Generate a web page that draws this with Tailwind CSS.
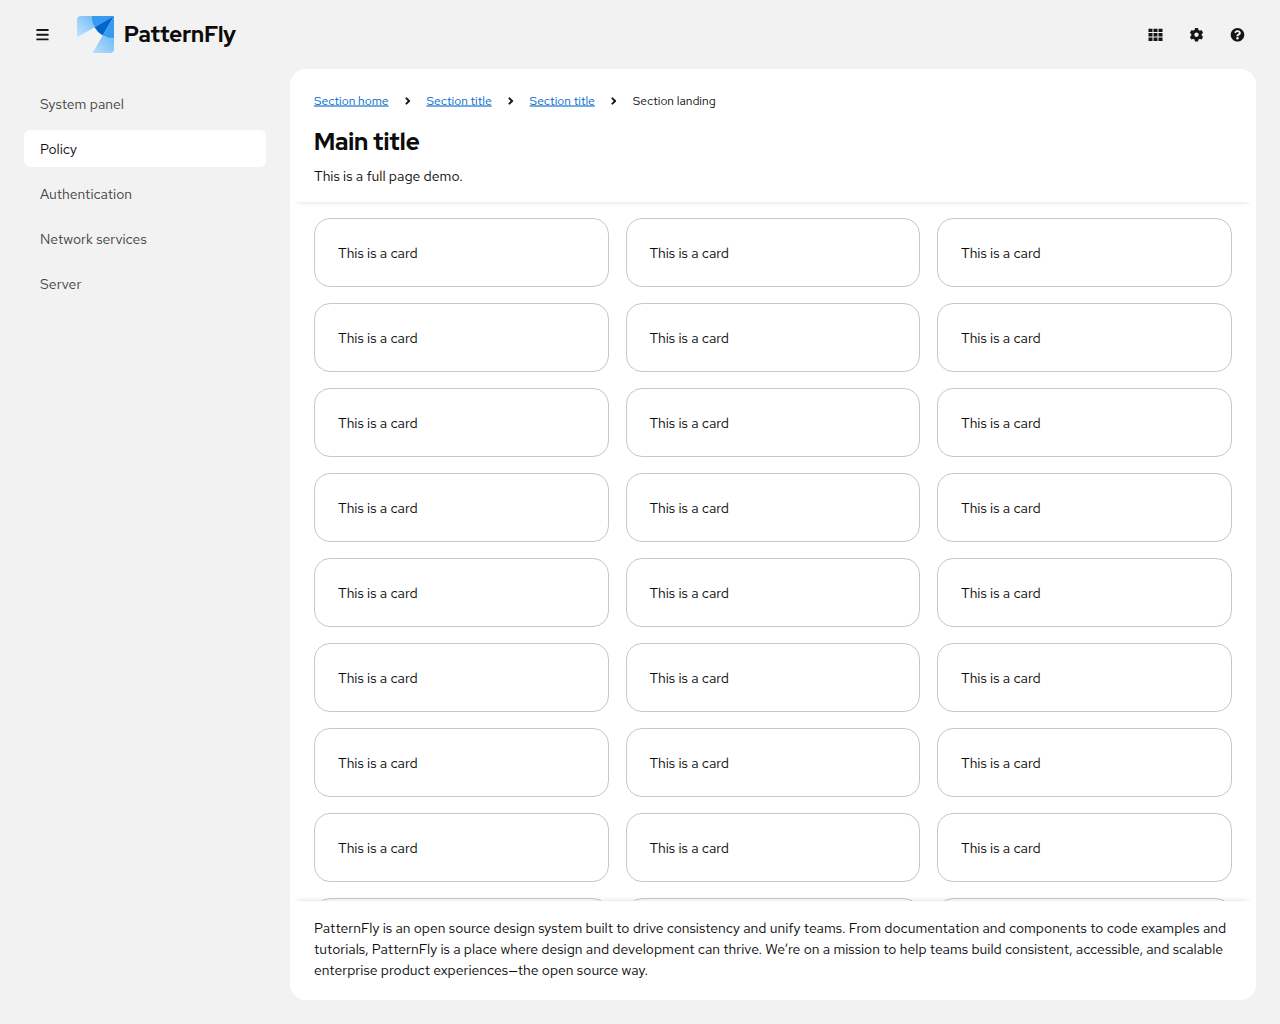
<!DOCTYPE html>
<html lang="en">
<head>
<meta charset="utf-8">
<title>PatternFly</title>
<script src="https://cdn.jsdelivr.net/npm/@tailwindcss/browser@4"></script>
</head>
<body class="h-screen overflow-hidden bg-[#f2f2f2] font-['Red_Hat_Text',Lato,sans-serif] text-sm leading-[21px] text-[#0c0c0c]">
<div class="flex h-screen flex-col">
  <header class="flex h-[69px] shrink-0 items-center justify-between pr-[35px] pl-9">
    <div class="flex items-center">
      <button class="h-[13px] w-[13px]" aria-label="Menu">
        <svg class="size-[13px]" viewBox="0 0 13 13" fill="#151515"><rect x=".4" y="1.1" width="12.2" height="1.9" rx=".4"/><rect x=".4" y="5.75" width="12.2" height="1.9" rx=".4"/><rect x=".4" y="10.4" width="12.2" height="1.9" rx=".4"/></svg>
      </button>
      <svg class="ml-7 size-[37px]" viewBox="0 0 37 37">
        <defs>
          <linearGradient id="a" x1="2" y1="20" x2="18" y2="2" gradientUnits="userSpaceOnUse"><stop stop-color="#bee1fc"/><stop offset="1" stop-color="#73bcf7"/></linearGradient>
          <linearGradient id="b" x1="18" y1="36" x2="34" y2="20" gradientUnits="userSpaceOnUse"><stop stop-color="#b5dbfa"/><stop offset="1" stop-color="#73bcf7"/></linearGradient>
        </defs>
        <path fill="url(#a)" d="M4 0H14.5A22.5 22.5 0 0 0 17.5 11.25L0 21.5V4A4 4 0 0 1 4 0Z"/>
        <path fill="#389af0" d="M14.5 0H37L17.5 11.25A22.5 22.5 0 0 1 14.5 0Z"/>
        <path fill="#0066cc" d="M37 0L17.5 11.25A22.5 22.5 0 0 0 25.75 19.5Z"/>
        <path fill="#389af0" d="M37 0L25.75 19.5A22.5 22.5 0 0 0 37 22.5Z"/>
        <path fill="url(#b)" d="M25.75 19.5A22.5 22.5 0 0 0 37 22.5V33A4 4 0 0 1 33 37H15.5Z"/>
      </svg>
      <span class="ml-2.5 pb-px font-['Red_Hat_Display',Inter,sans-serif] text-[22px] font-extrabold">PatternFly</span>
    </div>
    <div class="flex items-center gap-[26px]">
      <svg class="size-[15px]" viewBox="0 0 15 15" fill="#151515"><path d="M.5 1.7h4v3.4h-4zM5.5 1.7h4v3.4h-4zM10.5 1.7h4v3.4h-4zM.5 6.1h4v3.4h-4zM5.5 6.1h4v3.4h-4zM10.5 6.1h4v3.4h-4zM.5 10.5h4v3.4h-4zM5.5 10.5h4v3.4h-4zM10.5 10.5h4v3.4h-4z"/></svg>
      <svg class="size-[15px]" viewBox="-18 -28 548 548" fill="#151515"><path d="M487.4 315.7l-42.6-24.6c4.3-23.2 4.3-47 0-70.2l42.6-24.6c4.9-2.8 7.1-8.6 5.5-14-11.1-35.6-30-67.8-54.7-94.6-3.8-4.1-10-5.1-14.8-2.3L380.8 110c-17.9-15.4-38.5-27.3-60.8-35.1V25.8c0-5.6-3.9-10.5-9.4-11.7-36.7-8.2-74.3-7.8-109.2 0-5.5 1.2-9.4 6.1-9.4 11.7V75c-22.2 7.9-42.8 19.8-60.8 35.1L88.7 85.5c-4.9-2.8-11-1.9-14.8 2.3-24.7 26.7-43.6 58.9-54.7 94.6-1.7 5.4.6 11.2 5.5 14L67.3 221c-4.3 23.2-4.3 47 0 70.2l-42.6 24.6c-4.9 2.8-7.1 8.6-5.5 14 11.1 35.6 30 67.8 54.7 94.6 3.8 4.1 10 5.1 14.8 2.3l42.6-24.6c17.9 15.4 38.5 27.3 60.8 35.1v49.2c0 5.6 3.9 10.5 9.4 11.7 36.7 8.2 74.3 7.8 109.2 0 5.5-1.2 9.4-6.1 9.4-11.7v-49.2c22.2-7.9 42.8-19.8 60.8-35.1l42.6 24.6c4.9 2.8 11 1.9 14.8-2.3 24.7-26.7 43.6-58.9 54.7-94.6 1.5-5.5-.7-11.3-5.6-14.1zM256 336c-44.1 0-80-35.9-80-80s35.9-80 80-80 80 35.9 80 80-35.9 80-80 80z"/></svg>
      <svg class="size-[15px]" viewBox="-18 -28 548 548" fill="#151515"><path d="M504 256c0 136.997-111.043 248-248 248S8 392.997 8 256C8 119.083 119.043 8 256 8s248 111.083 248 248zM262.655 90c-54.497 0-89.255 22.957-116.549 63.758-3.536 5.286-2.353 12.415 2.715 16.258l34.699 26.31c5.205 3.947 12.621 3.008 16.665-2.122 17.864-22.658 30.113-35.797 57.303-35.797 20.429 0 45.698 13.148 45.698 32.958 0 14.976-12.363 22.667-32.534 33.976C247.128 238.528 216 254.941 216 296v4c0 6.627 5.373 12 12 12h56c6.627 0 12-5.373 12-12v-1.333c0-28.462 83.186-29.647 83.186-106.667 0-58.002-60.165-102-116.531-102zM256 338c-25.365 0-46 20.635-46 46 0 25.364 20.635 46 46 46s46-20.636 46-46c0-25.365-20.635-46-46-46z"/></svg>
    </div>
  </header>
  <div class="flex min-h-0 flex-1 pb-6">
    <nav class="w-[290px] shrink-0 px-6 pt-4">
      <ul class="flex flex-col gap-2 text-[#444444]">
        <li class="h-[37px] rounded-md px-4 pt-[9px]">System panel</li>
        <li class="h-[37px] rounded-md bg-white px-4 pt-[9px] text-[#0c0c0c]">Policy</li>
        <li class="h-[37px] rounded-md px-4 pt-[9px]">Authentication</li>
        <li class="h-[37px] rounded-md px-4 pt-[9px]">Network services</li>
        <li class="h-[37px] rounded-md px-4 pt-[9px]">Server</li>
      </ul>
    </nav>
    <main class="mr-6 flex min-w-0 flex-1 flex-col overflow-hidden rounded-2xl bg-white">
      <section class="z-10 h-[133px] shrink-0 bg-white px-6 pt-[23px] shadow-[0_8px_5px_-8px_rgba(41,41,41,0.18)]">
        <div class="flex h-[18px] items-center text-xs leading-[18px]">
          <a class="w-[75px] whitespace-nowrap text-[#0066cc] underline decoration-[#0066cc]/55 decoration-2 underline-offset-0">Section home</a>
          <svg class="mx-[15px] h-3 w-[7.5px]" viewBox="0 0 256 512" fill="#151515"><path d="M224.3 273l-136 136c-9.4 9.4-24.6 9.4-33.9 0l-22.6-22.6c-9.4-9.4-9.4-24.6 0-33.9l96.4-96.4-96.4-96.4c-9.4-9.4-9.4-24.6 0-33.9L54.3 103c9.4-9.4 24.6-9.4 33.9 0l136 136c9.5 9.4 9.5 24.6.1 34z"/></svg>
          <a class="w-[65.6px] whitespace-nowrap text-[#0066cc] underline decoration-[#0066cc]/55 decoration-2 underline-offset-0">Section title</a>
          <svg class="mx-[15px] h-3 w-[7.5px]" viewBox="0 0 256 512" fill="#151515"><path d="M224.3 273l-136 136c-9.4 9.4-24.6 9.4-33.9 0l-22.6-22.6c-9.4-9.4-9.4-24.6 0-33.9l96.4-96.4-96.4-96.4c-9.4-9.4-9.4-24.6 0-33.9L54.3 103c9.4-9.4 24.6-9.4 33.9 0l136 136c9.5 9.4 9.5 24.6.1 34z"/></svg>
          <a class="w-[65.6px] whitespace-nowrap text-[#0066cc] underline decoration-[#0066cc]/55 decoration-2 underline-offset-0">Section title</a>
          <svg class="mx-[15px] h-3 w-[7.5px]" viewBox="0 0 256 512" fill="#151515"><path d="M224.3 273l-136 136c-9.4 9.4-24.6 9.4-33.9 0l-22.6-22.6c-9.4-9.4-9.4-24.6 0-33.9l96.4-96.4-96.4-96.4c-9.4-9.4-9.4-24.6 0-33.9L54.3 103c9.4-9.4 24.6-9.4 33.9 0l136 136c9.5 9.4 9.5 24.6.1 34z"/></svg>
          <span class="whitespace-nowrap">Section landing</span>
        </div>
        <h1 class="mt-4 font-['Red_Hat_Display',Inter,sans-serif] text-2xl leading-[31px] font-extrabold tracking-[-0.05px]">Main title</h1>
        <p class="mt-[9px]">This is a full page demo.</p>
      </section>
      <section class="min-h-0 flex-1 overflow-hidden px-6 pt-4">
        <div id="cards" class="grid grid-cols-[295px_294px_295px] gap-x-[17px] gap-y-4"></div>
      </section>
      <section class="z-10 h-[99px] shrink-0 bg-white px-6 pt-[17px] shadow-[0_-8px_5px_-8px_rgba(41,41,41,0.18)]">
        <p>PatternFly is an open source design system built to drive consistency and unify teams. From documentation and components to code examples and tutorials, PatternFly is a place where design and development can thrive. We’re on a mission to help teams build consistent, accessible, and scalable enterprise product experiences—the open source way.</p>
      </section>
    </main>
  </div>
</div>
<script>
  document.getElementById('cards').innerHTML = Array.from({ length: 27 }, (_, i) =>
    `<div class="h-[69px] rounded-2xl border border-[#c7c7c7] px-[23px] pt-6 [&:nth-child(3n+2)]:px-[22.4px]">${i < 24 ? 'This is a card' : ''}</div>`).join('');
</script>
</body>
</html>
